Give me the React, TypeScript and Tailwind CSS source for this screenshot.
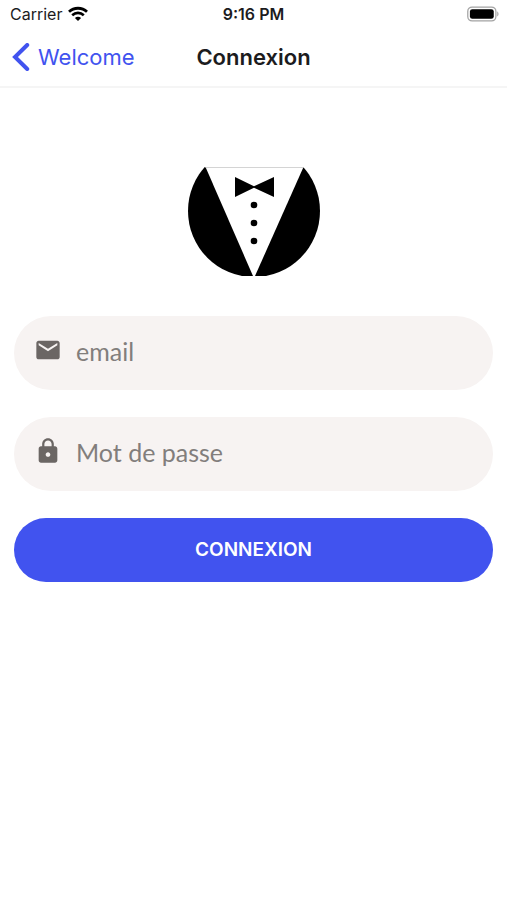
import React, { useState } from 'react'
import { MdEmail, MdLock } from 'react-icons/md'
import type { IconType } from 'react-icons'

interface FieldProps {
  id: string
  type: 'email' | 'password'
  label: string
  icon: IconType
  value: string
  onChange: (value: string) => void
}

function StatusBar() {
  return (
    <div className="grid h-7 grid-cols-3 items-center px-2 text-base leading-5 text-[#1c1c1e]">
      <div className="flex items-center gap-1.5 pl-0.5">
        <span>Carrier</span>
        <svg viewBox="0 0 20 15" className="h-4 w-5" fill="none" aria-hidden="true">
          <path d="M1 5.2C6 .6 14 .6 19 5.2" stroke="#000" strokeWidth="2.8" />
          <path d="M4.2 8.7c3.4-3 8.2-3 11.6 0" stroke="#000" strokeWidth="2.7" />
          <path d="M10 14.6 6.9 11.5c1.8-1.6 4.4-1.6 6.2 0L10 14.6Z" fill="#000" />
        </svg>
      </div>
      <span className="text-center font-semibold">9:16 PM</span>
      <svg viewBox="0 0 33 16" className="h-4 w-8 justify-self-end" fill="none" aria-hidden="true">
        <rect x="0.8" y="0.8" width="29" height="14.4" rx="4.5" stroke="#a3a3a3" strokeWidth="1.3" />
        <rect x="3" y="3" width="24.6" height="10" rx="2.5" fill="#000" />
        <path d="M31.2 5.5c1.7.6 1.7 4.4 0 5Z" fill="#a3a3a3" />
      </svg>
    </div>
  )
}

function NavBar() {
  return (
    <header className="grid h-15 grid-cols-[1fr_auto_1fr] items-center border-b-2 border-[#f5f5f5] px-3">
      <a href="#welcome" className="flex items-center gap-2 text-[22px] leading-7 text-[#4153ef]">
        <svg viewBox="0 0 18 28" className="h-7 w-4.5" fill="none" aria-hidden="true">
          <path
            d="M15.2 2 3 14l12.2 12"
            stroke="currentColor"
            strokeWidth="4"
            strokeLinecap="round"
            strokeLinejoin="miter"
          />
        </svg>
        Welcome
      </a>
      <h1 className="text-[22px] leading-7 font-semibold text-[#1c1c1e]">Connexion</h1>
    </header>
  )
}

function Logo() {
  return (
    <svg viewBox="0 0 132 109" className="mx-auto h-[109px] w-[132px]" role="img" aria-label="Logo">
      <circle cx="66" cy="44" r="66" fill="#000" />
      <path d="M17.5 0h98L67 109h-2Z" fill="#fff" />
      <path d="M17.5.5h98" stroke="#d4d4d4" />
      <path d="M47 10v20l19-9.2L86 30V10l-20 9.2Z" fill="#000" />
      <circle cx="66" cy="38" r="3.3" />
      <circle cx="66" cy="56" r="3.3" />
      <circle cx="66" cy="74" r="3.3" />
    </svg>
  )
}

function Field({ id, type, label, icon: Icon, value, onChange }: FieldProps) {
  return (
    <div className="flex h-[74px] items-center gap-3.5 rounded-full bg-[#f7f3f2] px-5">
      <label htmlFor={id} className="pb-1.5 text-[#6b6664]">
        <Icon className="size-7" aria-hidden="true" />
      </label>
      <input
        id={id}
        type={type}
        aria-label={label}
        placeholder={label}
        value={value}
        onChange={(e) => onChange(e.target.value)}
        className="h-full min-w-0 flex-1 bg-transparent pb-1 font-[Lato,sans-serif] text-[25px] text-[#4b4745] outline-none placeholder:text-[#827e7c]"
      />
    </div>
  )
}

export default function App() {
  const [email, setEmail] = useState('')
  const [password, setPassword] = useState('')

  return (
    <div className="min-h-screen bg-white font-[Inter,sans-serif]">
      <StatusBar />
      <NavBar />
      <main className="px-3.5 pt-[79px]">
        <Logo />
        <form className="mt-10 flex flex-col gap-[27px]" onSubmit={(e) => e.preventDefault()}>
          <Field id="email" type="email" label="email" icon={MdEmail} value={email} onChange={setEmail} />
          <Field
            id="password"
            type="password"
            label="Mot de passe"
            icon={MdLock}
            value={password}
            onChange={setPassword}
          />
          <button
            type="submit"
            className="h-16 rounded-full bg-[#4153ef] text-[19px] font-semibold text-white"
          >
            CONNEXION
          </button>
        </form>
      </main>
    </div>
  )
}
